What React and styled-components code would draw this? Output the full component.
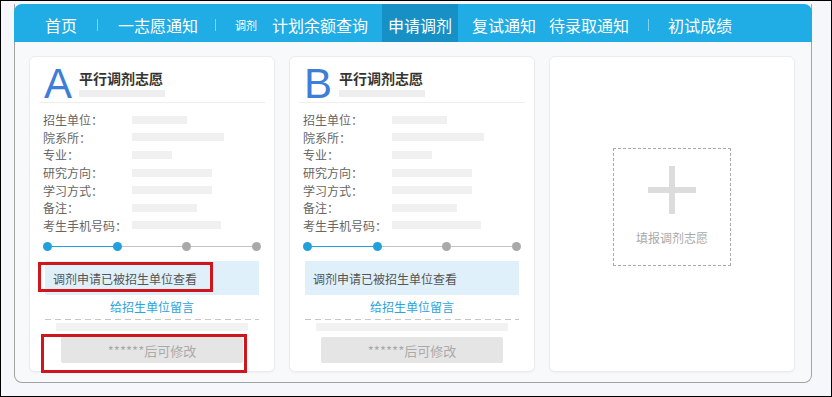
import React from "react";
import styled, { createGlobalStyle } from "styled-components";

const GlobalStyle = createGlobalStyle`
  html, body { margin: 0; padding: 0; background: #f4f6fa; }
  body { font-family: "Noto Sans CJK SC", "Noto Sans", sans-serif; }
  * { box-sizing: border-box; }
`;

const Frame = styled.div`
  width: 832px;
  height: 397px;
  border: 1px solid #000;
  background: #f5f7fa;
  padding: 3px 0 0 13px;
`;

const Panel = styled.div`
  width: 798px;
  height: 379px;
  border: 1px solid #a3a3a3;
  border-top: none;
  border-radius: 0 0 8px 8px;
  background: #f8f9fb;
`;

const Header = styled.div`
  display: flex;
  align-items: stretch;
  height: 38px;
  margin: 0 -1px;
  background: #20ace4;
  border-radius: 8px 8px 0 0;
  padding-left: 25px;
`;

const NavItem = styled.div`
  display: flex;
  align-items: center;
  padding: 3px 6px 0;
  margin-left: ${(p) => p.$ml || 0}px;
  color: #fff;
  font-size: ${(p) => (p.$small ? 11 : 16)}px;
  background: ${(p) => (p.$active ? "#1790c5" : "transparent")};
  white-space: nowrap;
`;

const Sep = styled.div`
  align-self: center;
  width: 1px;
  height: 12px;
  margin: 3px ${(p) => p.$r ?? 14}px 0 ${(p) => p.$l ?? 14}px;
  background: rgba(255, 255, 255, 0.45);
`;

const Cards = styled.div`
  display: flex;
  gap: 14px;
  padding: 14px 0 0 14px;
`;

const Card = styled.div`
  position: relative;
  width: 246px;
  height: 316px;
  background: #fff;
  border: 1px solid #eaecef;
  border-radius: 6px;
  box-shadow: 0 1px 2px rgba(0, 0, 0, 0.04);
  padding: 0 9px;
`;

const CardHeader = styled.div`
  display: flex;
  align-items: flex-start;
  height: 46px;
  padding: 6px 0 0 5px;
  border-bottom: 1px solid #eeeeee;
`;

const Letter = styled.div`
  font-family: "Liberation Sans", Arial, sans-serif;
  font-size: 42px;
  line-height: 42px;
  color: #3c7ed8;
`;

const TitleBlock = styled.div`
  margin: 7px 0 0 7px;
`;

const Title = styled.div`
  font-size: 14px;
  line-height: 16px;
  font-weight: 700;
  color: #333;
`;

const Placeholder = styled.div`
  width: ${(p) => p.$w}px;
  height: ${(p) => p.$h || 8}px;
  margin: ${(p) => p.$m || "0"};
  background: ${(p) => p.$bg || "#f0f0f0"};
`;

const InfoList = styled.div`
  padding-top: 8px;
`;

const Row = styled.div`
  display: flex;
  align-items: center;
  height: 17.6px;
  padding-left: 4px;
`;

const Label = styled.div`
  width: 89px;
  font-size: 12px;
  color: #666;
  white-space: nowrap;
`;

const Stepper = styled.div`
  display: flex;
  align-items: center;
  height: 10px;
  margin-top: 7px;
  padding: 0 4px;
`;

const Dot = styled.div`
  width: 9px;
  height: 9px;
  border-radius: 50%;
  flex: none;
  background: ${(p) => (p.$on ? "#22a0dc" : "#a9a9a9")};
`;

const StepLine = styled.div`
  flex: 1;
  height: 1px;
  background: ${(p) => (p.$on ? "#22a0dc" : "#c4c4c4")};
`;

const Notice = styled.div`
  display: flex;
  align-items: center;
  width: 214px;
  height: 34px;
  margin: 10px auto 0;
  padding-left: 8px;
  background: #dff0fa;
  font-size: 12px;
  color: #555;
`;

const Link = styled.div`
  height: 24px;
  line-height: 24px;
  text-align: center;
  font-size: 12px;
  color: #2ba3dc;
`;

const Dashed = styled.div`
  width: 214px;
  height: 1px;
  margin: 0 auto;
  background: repeating-linear-gradient(90deg, #c6c6c6 0 6px, transparent 6px 10px);
`;

const DisabledButton = styled.div`
  display: flex;
  align-items: center;
  justify-content: center;
  width: 182px;
  height: 26px;
  margin: 6px auto 0;
  background: #e5e5e5;
  border-radius: 2px;
  font-size: 13px;
  color: #aaa;
`;

const Mark = styled.div`
  position: absolute;
  left: ${(p) => p.$x}px;
  top: ${(p) => p.$y}px;
  width: ${(p) => p.$w}px;
  height: ${(p) => p.$h}px;
  border: 3px solid #d0161d;
  pointer-events: none;
`;

const AddCard = styled(Card)`
  display: flex;
  justify-content: center;
  padding-top: 91px;
`;

const AddBox = styled.div`
  display: flex;
  flex-direction: column;
  align-items: center;
  width: 118px;
  height: 118px;
  padding-top: 17px;
  border: 1px dashed #aaa;
`;

const AddText = styled.div`
  margin-top: 16px;
  font-size: 12px;
  line-height: 16px;
  color: #aaa;
`;

const rows = [
  ["招生单位：", 55],
  ["院系所：", 92],
  ["专业：", 40],
  ["研究方向：", 80],
  ["学习方式：", 80],
  ["备注：", 65],
  ["考生手机号码：", 89],
];

function ChoiceCard({ letter, marked }) {
  return (
    <Card>
      <CardHeader>
        <Letter>{letter}</Letter>
        <TitleBlock>
          <Title>平行调剂志愿</Title>
          <Placeholder $w={86} $h={7} $m="4px 0 0" $bg="#eeeeee" />
        </TitleBlock>
      </CardHeader>
      <InfoList>
        {rows.map(([label, w]) => (
          <Row key={label}>
            <Label>{label}</Label>
            <Placeholder $w={w} />
          </Row>
        ))}
      </InfoList>
      <Stepper>
        <Dot $on />
        <StepLine $on />
        <Dot $on />
        <StepLine />
        <Dot />
        <StepLine />
        <Dot />
      </Stepper>
      <Notice>调剂申请已被招生单位查看</Notice>
      <Link>给招生单位留言</Link>
      <Dashed />
      <Placeholder $w={192} $m="3px auto 0" $bg="#f2f2f2" />
      <DisabledButton>******后可修改</DisabledButton>
      {marked && (
        <>
          <Mark $x={8} $y={205} $w={175} $h={30} />
          <Mark $x={11} $y={277} $w={206} $h={39} />
        </>
      )}
    </Card>
  );
}

export default function App() {
  return (
    <>
      <GlobalStyle />
      <Frame>
        <Panel>
          <Header>
            <NavItem>首页</NavItem>
            <Sep />
            <NavItem>一志愿通知</NavItem>
            <Sep $l={11} $r={13} />
            <NavItem $small>调剂</NavItem>
            <NavItem $ml={3}>计划余额查询</NavItem>
            <NavItem $ml={8} $active>申请调剂</NavItem>
            <NavItem $ml={8}>复试通知</NavItem>
            <NavItem $ml={1}>待录取通知</NavItem>
            <Sep $l={13} $r={13} />
            <NavItem>初试成绩</NavItem>
          </Header>
          <Cards>
            <ChoiceCard letter="A" marked />
            <ChoiceCard letter="B" />
            <AddCard>
              <AddBox>
                <svg width="48" height="48" viewBox="0 0 48 48">
                  <rect x="21" y="0" width="6" height="48" fill="#dcdcdc" />
                  <rect x="0" y="21" width="48" height="6" fill="#dcdcdc" />
                </svg>
                <AddText>填报调剂志愿</AddText>
              </AddBox>
            </AddCard>
          </Cards>
        </Panel>
      </Frame>
    </>
  );
}
